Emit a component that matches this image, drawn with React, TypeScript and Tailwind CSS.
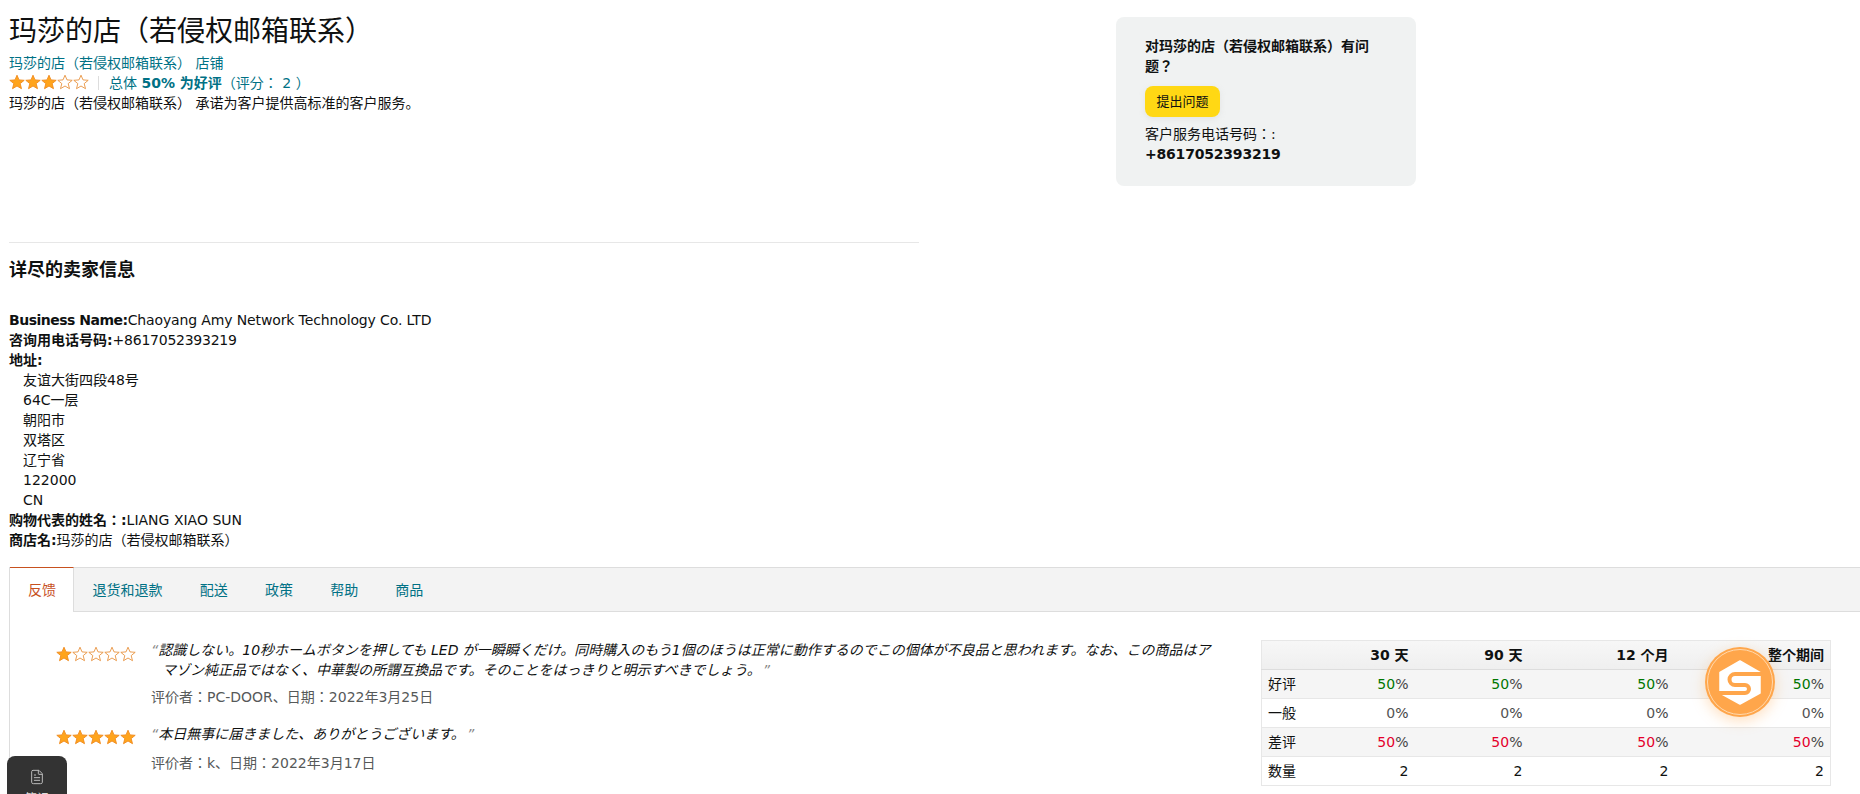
import React from "react";
import { FileText } from "lucide-react";

function Star({ filled }: { filled: boolean }) {
  return (
    <svg width="16" height="16" viewBox="0 0 16 16" className="block shrink-0">
      <path
        d="M8 1.2 L10 5.9 L15.2 6.3 L11.2 9.6 L12.5 14.7 L8 12 L3.5 14.7 L4.8 9.6 L0.8 6.3 L6 5.9 Z"
        fill={filled ? "#ffa41c" : "#ffffff"}
        stroke={filled ? "#ef8a1e" : "#e8933f"}
        strokeWidth="0.9"
        strokeLinejoin="round"
      />
    </svg>
  );
}

function Stars({ n }: { n: number }) {
  return (
    <div className="flex">
      {[0, 1, 2, 3, 4].map((i) => (
        <Star key={i} filled={i < n} />
      ))}
    </div>
  );
}

function Pct({ v, color }: { v: string; color: string }) {
  return (
    <>
      <span className={color}>{v}</span>
      <span className="text-[#444]">%</span>
    </>
  );
}

const green = "text-[#007600]";
const red = "text-[#e4002b]";
const grey = "text-[#555]";

const rows = [
  { label: "好评", bg: "bg-[#f5f5f5]", v: "50", color: green },
  { label: "一般", bg: "bg-white", v: "0", color: grey },
  { label: "差评", bg: "bg-[#f5f5f5]", v: "50", color: red },
];

export default function App() {
  return (
    <div className="relative h-[794px] w-full overflow-hidden bg-white font-['DejaVu_Sans','Noto_Sans_CJK_JP',sans-serif] text-sm leading-5 text-[#0f1111]">
      <div className="flex h-[242px] pl-[9px]">
        <div className="w-[1107px] shrink-0 pt-3">
          <h1 className="text-[28px] leading-10 font-normal">玛莎的店（若侵权邮箱联系）</h1>
          <div className="mt-px text-[#007185]">玛莎的店（若侵权邮箱联系） 店铺</div>
          <div className="flex h-5 items-center">
            <div className="-mt-[2px]">
              <Stars n={3} />
            </div>
            <div className="mr-2.5 ml-[9px] h-3.5 w-px bg-[#ddd]" />
            <span className="text-[#007185]">
              总体 <b>50% 为好评</b>（评分： 2 ）
            </span>
          </div>
          <p>玛莎的店（若侵权邮箱联系） 承诺为客户提供高标准的客户服务。</p>
        </div>
        <div className="mt-[17px] h-[169px] w-[300px] shrink-0 rounded-lg bg-[#f0f2f2] pt-[19px] pl-[29px]">
          <div className="w-[236px] font-bold">对玛莎的店（若侵权邮箱联系）有问题？</div>
          <button className="mt-2.5 block h-[31px] w-[75px] rounded-lg bg-[#ffd814] text-[13px] shadow-[0_2px_5px_rgba(213,217,217,0.5)]">
            提出问题
          </button>
          <div className="mt-[7px]">客户服务电话号码：:</div>
          <div className="font-bold tracking-[-0.2px]">+8617052393219</div>
        </div>
      </div>

      <div className="ml-[9px] h-px w-[910px] bg-[#e7e7e7]" />

      <div className="pl-[9px]">
        <h2 className="mt-[15px] text-lg leading-6 font-bold">详尽的卖家信息</h2>
        <div className="mt-7">
          <div>
            <b className="tracking-[-0.5px]">Business Name:</b>
            <span className="tracking-[-0.13px]">Chaoyang Amy Network Technology Co. LTD</span>
          </div>
          <div>
            <b>咨询用电话号码:</b>
            <span className="tracking-[-0.25px]">+8617052393219</span>
          </div>
          <div>
            <b>地址:</b>
          </div>
          <div className="pl-3.5">
            <div>友谊大街四段48号</div>
            <div>64C一层</div>
            <div>朝阳市</div>
            <div>双塔区</div>
            <div>辽宁省</div>
            <div>122000</div>
            <div>CN</div>
          </div>
          <div>
            <b>购物代表的姓名：:</b>LIANG XIAO SUN
          </div>
          <div>
            <b>商店名:</b>玛莎的店（若侵权邮箱联系）
          </div>
        </div>
      </div>

      <div className="mt-[17px] ml-[9px] border-l border-[#ddd]">
        <div className="flex h-[45px] border-y border-[#ddd] bg-[#f3f3f3] text-[#007185]">
          <div className="-mt-px -mb-px flex h-[45px] w-[64px] items-center justify-center border-t border-r border-t-[#c7511f] border-r-[#ddd] bg-white pl-px text-[#c7511f]">
            反馈
          </div>
          {["退货和退款", "配送", "政策", "帮助", "商品"].map((t) => (
            <div key={t} className="flex items-center px-[18.6px]">
              {t}
            </div>
          ))}
        </div>

        <div className="flex pt-7">
          <div className="w-[1251px] shrink-0 pt-px">
            <div className="flex">
              <div className="w-[46px] shrink-0" />
              <div className="w-[95px] shrink-0 pt-[5px]">
                <Stars n={1} />
              </div>
              <div className="w-[1060px] shrink-0">
                <p className="pl-[11px] -indent-[11px] leading-[19.5px] italic">
                  <span className="text-[#888]">“</span>
                  認識しない。10秒ホームボタンを押しても LED が一瞬瞬くだけ。同時購入のもう1個のほうは正常に動作するのでこの個体が不良品と思われます。なお、この商品はアマゾン純正品ではなく、中華製の所謂互換品です。そのことをはっきりと明示すべきでしょう。
                  <span className="ml-[9px] text-[#888]">”</span>
                </p>
                <div className="mt-[7px] text-[#565959]">评价者：PC-DOOR、日期：2022年3月25日</div>
              </div>
            </div>
            <div className="mt-[17px] flex">
              <div className="w-[46px] shrink-0" />
              <div className="w-[95px] shrink-0 pt-[5px]">
                <Stars n={5} />
              </div>
              <div className="w-[1060px] shrink-0">
                <p className="italic">
                  <span className="text-[#888]">“</span>
                  本日無事に届きました、ありがとうございます。
                  <span className="ml-[9px] text-[#888]">”</span>
                </p>
                <div className="mt-[9px] text-[#565959]">评价者：k、日期：2022年3月17日</div>
              </div>
            </div>
          </div>

          <table className="h-[146px] w-[569px] table-fixed border-collapse border border-[#e7e7e7] text-right">
            <colgroup>
              <col className="w-[60px]" />
              <col className="w-[93px]" />
              <col className="w-[114px]" />
              <col className="w-[146px]" />
              <col className="w-[156px]" />
            </colgroup>
            <thead>
              <tr className="h-[29px] border-b border-[#ddd] bg-linear-to-b from-[#f7f7f7] to-[#efefef]">
                <th />
                <th className="pr-1.5">30 天</th>
                <th className="pr-1.5">90 天</th>
                <th className="pr-1.5">12 个月</th>
                <th className="pr-1.5">整个期间</th>
              </tr>
            </thead>
            <tbody>
              {rows.map((r) => (
                <tr key={r.label} className={`h-[29px] border-b border-[#e7e7e7] ${r.bg}`}>
                  <td className="pl-1.5 text-left">{r.label}</td>
                  {[0, 1, 2, 3].map((i) => (
                    <td key={i} className="pr-1.5">
                      <Pct v={r.v} color={r.color} />
                    </td>
                  ))}
                </tr>
              ))}
              <tr className="h-[29px] bg-white">
                <td className="pl-1.5 text-left">数量</td>
                {[0, 1, 2, 3].map((i) => (
                  <td key={i} className="pr-1.5">
                    2
                  </td>
                ))}
              </tr>
            </tbody>
          </table>
        </div>
      </div>

      <div className="absolute top-[647px] left-[1705px] flex h-[70px] w-[70px] items-center justify-center rounded-full bg-[#ffa64b] shadow-[0_4px_14px_rgba(255,166,75,0.35)]">
        <div className="absolute inset-[2px] rounded-full border border-[#ffd9ae]" />
        <svg width="70" height="70" viewBox="0 0 70 70">
          <path d="M35 14 L55 25.5 V46 L35 57 L15 46 V25.5 Z" fill="#fff" strokeLinejoin="round" stroke="#fff" strokeWidth="1.5" />
          <path d="M56 27 H30 a5.5 5.5 0 0 0 0 11 H40 a4 4 0 0 1 0 8 H13" fill="none" stroke="#ffa64b" strokeWidth="4" />
        </svg>
      </div>

      <div className="absolute top-[756px] left-[7px] flex h-[60px] w-[60px] flex-col items-center rounded-t-lg bg-[#333] pt-[13px] text-xs leading-4 text-[#ddd]">
        <FileText size={16} strokeWidth={1.5} className="text-[#bbb]" />
        <div className="mt-[6px]">笔记</div>
      </div>
    </div>
  );
}
